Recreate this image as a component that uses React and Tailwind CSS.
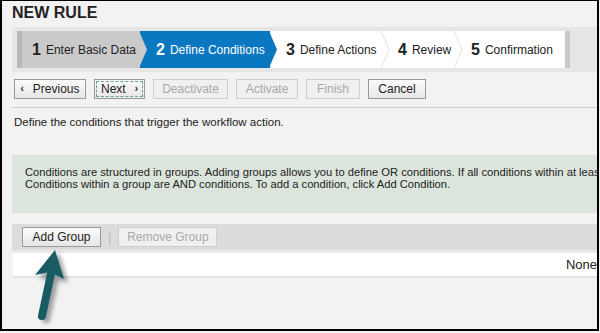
import React from 'react';

const Chevron = ({ fill, stroke }) => (
  <svg className="absolute top-0 -right-[8px] z-10" width="9" height="37" viewBox="0 0 9 37">
    <polygon points="0,0 8,18.5 0,37" fill={fill} />
    {stroke && <polyline points="0,0 8,18.5 0,37" fill="none" stroke={stroke} strokeWidth="1" />}
  </svg>
);

const Step = ({ num, label, variant, width, last, first }) => {
  const styles = {
    done: 'bg-[#cacaca] text-[#222]',
    active: 'bg-[#0a78c0] text-white',
    todo: 'bg-white text-[#222]',
  };
  return (
    <div className={`relative shrink-0 whitespace-nowrap flex items-center h-[37px] ${styles[variant]} ${width}`}>
      <span className={`${first ? 'pl-[10px]' : 'pl-[16px]'} text-[16px] font-bold leading-none`}>{num}</span>
      <span className="pl-[5px] text-[12px] leading-none">{label}</span>
      {variant === 'done' && <Chevron fill="#cacaca" />}
      {variant === 'active' && <Chevron fill="#0a78c0" />}
      {variant === 'todo' && !last && <Chevron fill="#ffffff" stroke="#e2e2e2" />}
    </div>
  );
};

const Btn = ({ children, disabled, focus, className = '' }) => (
  <button
    className={`shrink-0 whitespace-nowrap h-[20px] px-[6px] border text-[12px] leading-none flex items-center justify-center ${
      disabled
        ? 'border-[#cfcfcf] text-[#a8a8a8] bg-[#f0f0f0]'
        : 'border-[#9a9a9a] text-[#222] bg-gradient-to-b from-[#fbfbfb] to-[#e6e6e6]'
    } ${focus ? 'outline outline-1 outline-dashed outline-[#6aa0a0] -outline-offset-[3px]' : ''} ${className}`}
  >
    {children}
  </button>
);

export default function App() {
  return (
    <div className="w-[600px] h-[333px] bg-[#f2f2f2] relative" style={{ fontFamily: '"Liberation Sans", Arial, sans-serif' }}>
      <div className="w-[599px] h-[331px] border-l-2 border-t border-r-2 border-b-2 border-black overflow-hidden bg-[#f2f2f2] relative">
        <div className="w-[640px] pl-[10px]">
          {/* Title */}
          <div className="h-[26px] pt-[3px] text-[16px] font-bold text-[#222] leading-[18px]">NEW RULE</div>

          {/* Wizard */}
          <div className="bg-[#e6e6e6] h-[45px] pt-[4px] pl-[5px] flex">
            <div className="w-[5px] h-[37px] bg-[#b8b8b8] shrink-0" />
            <Step num="1" label="Enter Basic Data" variant="done" width="w-[118px]" first />
            <Step num="2" label="Define Conditions" variant="active" width="w-[130px]" />
            <Step num="3" label="Define Actions" variant="todo" width="w-[112px]" />
            <Step num="4" label="Review" variant="todo" width="w-[73px]" />
            <Step num="5" label="Confirmation" variant="todo" width="w-[110px]" last />
            <div className="w-[5px] h-[37px] bg-[#c8c8c8] shrink-0" />
          </div>

          {/* Toolbar */}
          <div className="flex items-start gap-[8px] pt-[7px] pl-[2px] h-[36px] border-b border-[#cfcfcf]">
            <Btn className="w-[72px] gap-[9px]">
              <span className="text-[10px] font-bold">&#x2039;</span>
              <span>Previous</span>
            </Btn>
            <Btn focus className="w-[51px] gap-[9px]">
              <span>Next</span>
              <span className="text-[10px] font-bold">&#x203A;</span>
            </Btn>
            <Btn disabled className="w-[75px]">Deactivate</Btn>
            <Btn disabled className="w-[62px]">Activate</Btn>
            <Btn disabled className="w-[54px]">Finish</Btn>
            <Btn className="w-[58px]">Cancel</Btn>
          </div>

          <div className="pl-[2px] pt-[7px] text-[11.5px] text-[#222] leading-[14px]">
            Define the conditions that trigger the workflow action.
          </div>

          {/* Info box */}
          <div className="mt-[26px] bg-[#dce5dc] h-[58px] pl-[13px] pt-[11px] text-[11.2px] leading-[12px] text-[#222] whitespace-nowrap">
            Conditions are structured in groups. Adding groups allows you to define OR conditions. If all conditions within at least one group are met, the action is triggered.
            <br />
            Conditions within a group are AND conditions. To add a condition, click Add Condition.
          </div>

          {/* Group toolbar */}
          <div className="mt-[11px] bg-[#dcdcdc] h-[26px] pl-[10px] flex items-center gap-[7px] border-b-[3px] border-[#e8e8e8] box-content">
            <Btn className="w-[79px]">Add Group</Btn>
            <span className="text-[#b8b8b8] text-[13px] leading-none">|</span>
            <Btn disabled className="w-[99px]">Remove Group</Btn>
          </div>
          <div className="ml-[1px] w-[600px] h-[25px] bg-white border-b-2 border-[#e4e4e4] flex items-center justify-end pr-[16px] text-[13px] text-[#222]">
            None
          </div>
        </div>

        {/* Annotation arrow */}
        <svg className="absolute left-0 top-0 pointer-events-none" width="120" height="331">
          <defs>
            <filter id="sh" x="-50%" y="-50%" width="200%" height="200%">
              <feGaussianBlur stdDeviation="2.2" />
            </filter>
          </defs>
          <g transform="translate(4,3)" filter="url(#sh)" opacity="0.55">
            <line x1="40" y1="315" x2="50" y2="268" stroke="#555" strokeWidth="8" strokeLinecap="round" />
            <polygon points="53,249 33,274 62,278" fill="#555" />
          </g>
          <line x1="40" y1="315" x2="50" y2="268" stroke="#175c62" strokeWidth="8" strokeLinecap="round" />
          <polygon points="53,249 33,274 48,271 62,278" fill="#175c62" />
        </svg>
      </div>
    </div>
  );
}
